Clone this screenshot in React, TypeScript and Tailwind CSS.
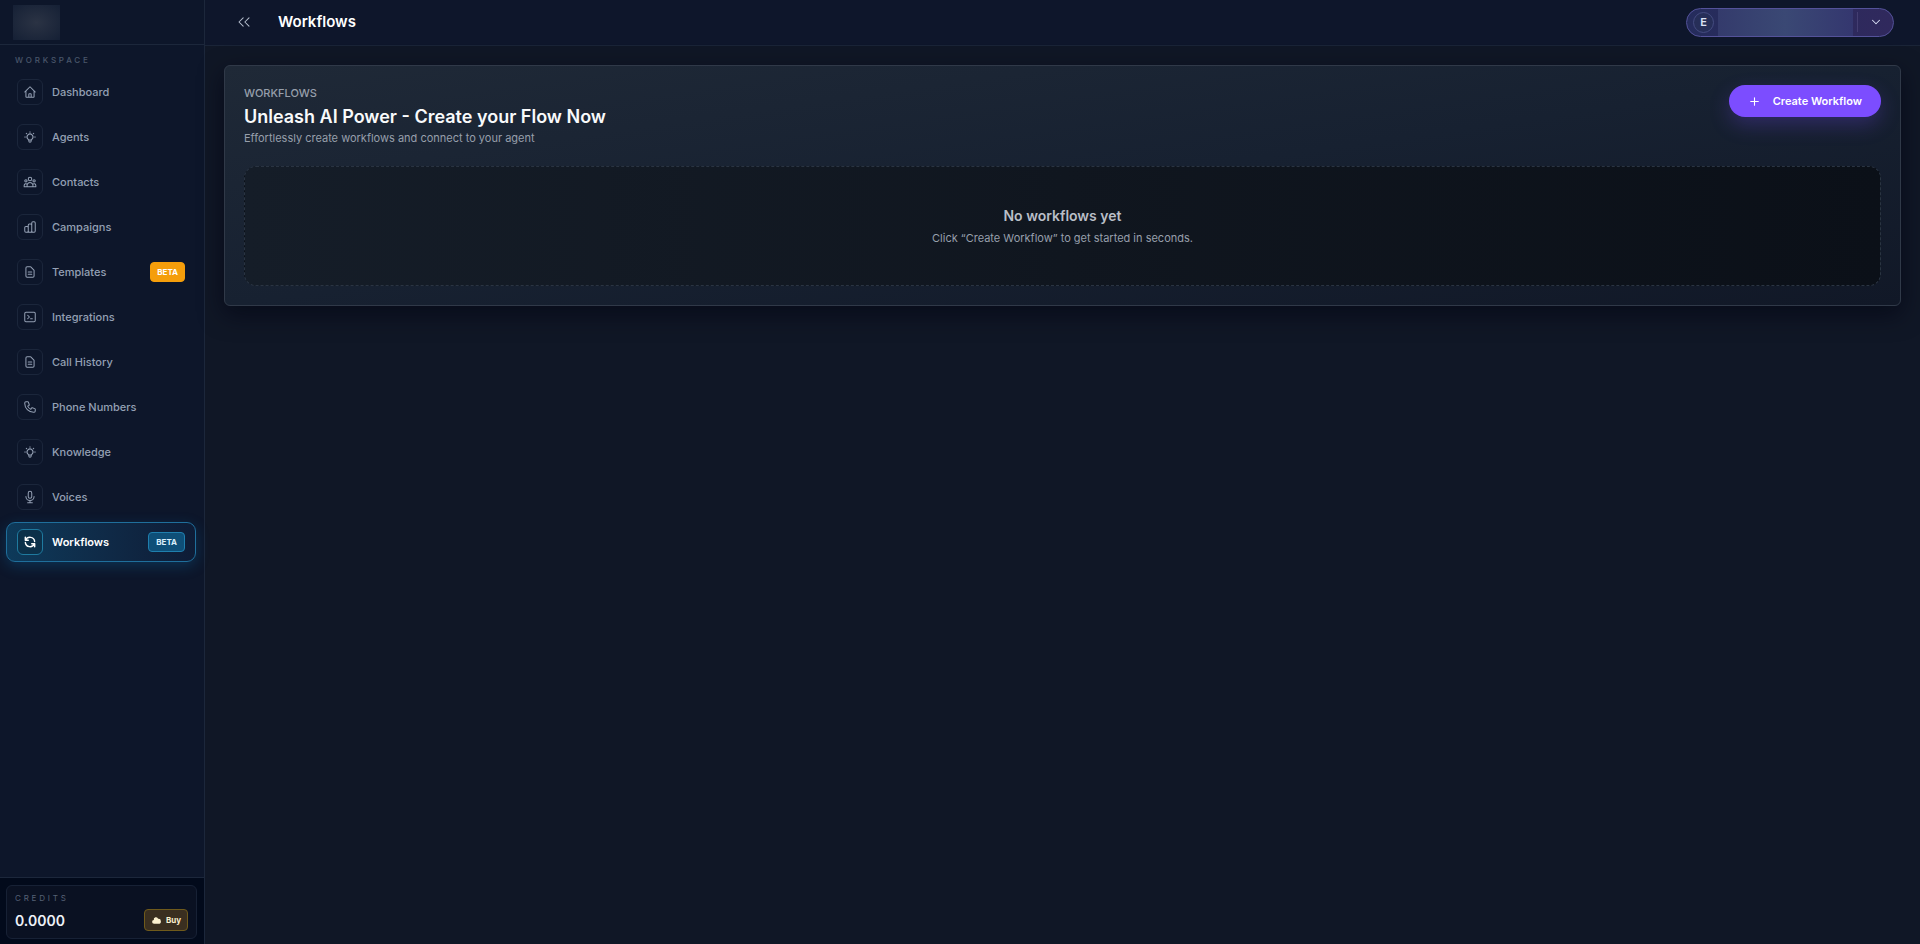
import React from 'react';
import clsx from 'clsx';
import type { IconType } from 'react-icons';
import {
  HiCloud,
  HiOutlineChartBar,
  HiOutlineDocumentText,
  HiOutlineHome,
  HiOutlineLightBulb,
  HiOutlineMicrophone,
  HiOutlinePhone,
  HiOutlineRefresh,
  HiOutlineTerminal,
  HiOutlineUserGroup,
} from 'react-icons/hi';
import { ChevronDown, ChevronsLeft, Plus } from 'lucide-react';

type NavItem = {
  label: string;
  icon: IconType;
  active?: boolean;
  beta?: boolean;
};

const navItems: NavItem[] = [
  { label: 'Dashboard', icon: HiOutlineHome },
  { label: 'Agents', icon: HiOutlineLightBulb },
  { label: 'Contacts', icon: HiOutlineUserGroup },
  { label: 'Campaigns', icon: HiOutlineChartBar },
  { label: 'Templates', icon: HiOutlineDocumentText, beta: true },
  { label: 'Integrations', icon: HiOutlineTerminal },
  { label: 'Call History', icon: HiOutlineDocumentText },
  { label: 'Phone Numbers', icon: HiOutlinePhone },
  { label: 'Knowledge', icon: HiOutlineLightBulb },
  { label: 'Voices', icon: HiOutlineMicrophone },
  { label: 'Workflows', icon: HiOutlineRefresh, beta: true, active: true },
];

function NavLink({ label, icon: Icon, active, beta }: NavItem) {
  return (
    <a
      href="#"
      aria-current={active ? 'page' : undefined}
      className={clsx(
        'flex h-10 items-center gap-[9px] rounded-[9px] border px-[10px] text-[11px]',
        active
          ? 'border-[#1f6f9c] bg-gradient-to-r from-[#0d3a5a] to-[#0e1c36] font-semibold text-white shadow-[0_4px_14px_rgba(14,116,180,0.3)]'
          : 'border-transparent font-medium text-[#94a0b4]'
      )}
    >
      <span
        className={clsx(
          'flex size-[26px] shrink-0 items-center justify-center rounded-md border',
          active ? 'border-[#1f7a9f] bg-[#0c3049]' : 'border-[#1b263b]'
        )}
      >
        <Icon size={14} className={active ? '[&_path]:[stroke-width:2.5]' : '[&_path]:[stroke-width:1.75]'} />
      </span>
      <span className="grow">{label}</span>
      {beta && (
        <span
          className={clsx(
            'flex h-5 items-center rounded border text-[8px] font-bold',
            active
              ? 'border-[#1f7fae] bg-[#0e4f78] px-[7px] text-[#dbeffc]'
              : 'border-[#f59e0b] bg-[#f59e0b] px-[6px] text-white'
          )}
        >
          BETA
        </span>
      )}
    </a>
  );
}

function Sidebar() {
  return (
    <aside className="flex w-[205px] shrink-0 flex-col border-r border-[#1c273b] bg-[#0d162a]">
      {/* Logo */}
      <div className="flex h-[45px] shrink-0 items-center border-b border-[#1c273b] px-[13px]">
        <div className="h-[35px] w-[47px] bg-radial from-[#2b3344] to-[#152035]" />
      </div>

      <h2 className="mt-[7px] px-[15px] text-[8px] leading-4 font-medium tracking-[0.35em] text-[#4a566b]">
        WORKSPACE
      </h2>
      <nav className="mt-1 flex grow flex-col gap-[5px] pr-2 pl-[6px]">
        {navItems.map((item) => (
          <NavLink key={item.label} {...item} />
        ))}
      </nav>

      {/* Credits */}
      <div className="border-t border-[#1c273b] bg-[#020a1b] pt-[7px] pr-[7px] pb-[5px] pl-[6px]">
        <div className="rounded-md border border-[#172135] bg-[#0a1122] px-2 pt-1 pb-[7px]">
          <p className="text-[8px] leading-4 tracking-[0.35em] text-[#566175]">CREDITS</p>
          <div className="flex items-center justify-between pt-[3px]">
            <span className="text-[14px] font-semibold text-[#eef2f8]">0.0000</span>
            <button className="flex h-[22px] w-[44px] items-center justify-center gap-1 rounded border border-[#6f5a1b] bg-[#3a2f20] text-[8px] font-bold text-[#fbf0cf]">
              <HiCloud size={11} />
              Buy
            </button>
          </div>
        </div>
      </div>
    </aside>
  );
}

function Header() {
  return (
    <header className="flex h-[46px] shrink-0 items-center border-b border-[#1a2437] bg-[#0e162b] pr-[26px] pb-px pl-[29px]">
      <button aria-label="Collapse sidebar" className="text-[#b4bdcc]">
        <ChevronsLeft size={20} strokeWidth={1.25} />
      </button>
      <h1 className="ml-6 grow text-[15px] font-semibold text-white">Workflows</h1>
      <button
        aria-label="Account menu"
        className="flex h-[29px] w-[208px] items-center overflow-hidden rounded-full border border-[#54529a] bg-gradient-to-r from-[#252c5c] to-[#30295d] pl-[6px]"
      >
        <span className="flex size-[21px] items-center justify-center rounded-full border border-[#454c80] bg-[#262e58] text-[11px] font-semibold text-[#dbe1f5]">
          E
        </span>
        <span className="ml-1 h-full w-[135px] bg-gradient-to-r from-[#343b6c] via-[#3a4874] to-[#34376f]" />
        <span className="ml-1 h-5 w-px bg-[#443e72]" />
        <span className="flex grow justify-center text-[#dbe1f5]">
          <ChevronDown size={14} strokeWidth={1.75} />
        </span>
      </button>
    </header>
  );
}

export default function App() {
  return (
    <div className="flex min-h-screen bg-[#101726] font-['Inter',sans-serif]">
      <Sidebar />

      <div className="flex min-w-0 grow flex-col">
        <Header />

        {/* Main Content */}
        <main className="grow p-[19px]">
          <section className="rounded-md border border-[#303948] bg-gradient-to-br from-[#1f2937] via-[#172131] to-[#111827] p-[19px] shadow-[0_8px_24px_rgba(0,4,16,0.6)]">
            <div className="flex items-start justify-between">
              <div>
                <p className="text-[11px] leading-4 font-medium text-[#979fab]">WORKFLOWS</p>
                <h2 className="mt-1 text-lg leading-6 font-semibold text-[#f9fafb]">
                  Unleash AI Power - Create your Flow Now
                </h2>
                <p className="mt-px text-[11px] leading-4 text-[#979fab]">
                  Effortlessly create workflows and connect to your agent
                </p>
              </div>
              <button className="flex h-8 items-center gap-3 rounded-full bg-[#7c4dff] px-[19px] text-[11px] font-semibold text-white shadow-[0_8px_20px_rgba(124,77,255,0.25)]">
                <Plus size={13} strokeWidth={2} />
                Create Workflow
              </button>
            </div>

            <div className="mt-5 rounded-xl border border-dashed border-[#2a3442] bg-gradient-to-r from-[#151d28] via-[#10161f] to-[#0b1018] pt-[37px] pb-[39px] text-center">
              <h3 className="text-[14px] leading-6 font-semibold text-[#b9bec7]">No workflows yet</h3>
              <p className="mt-[2px] text-[11px] leading-4 text-[#979fab]">
                Click “Create Workflow” to get started in seconds.
              </p>
            </div>
          </section>
        </main>
      </div>
    </div>
  );
}
